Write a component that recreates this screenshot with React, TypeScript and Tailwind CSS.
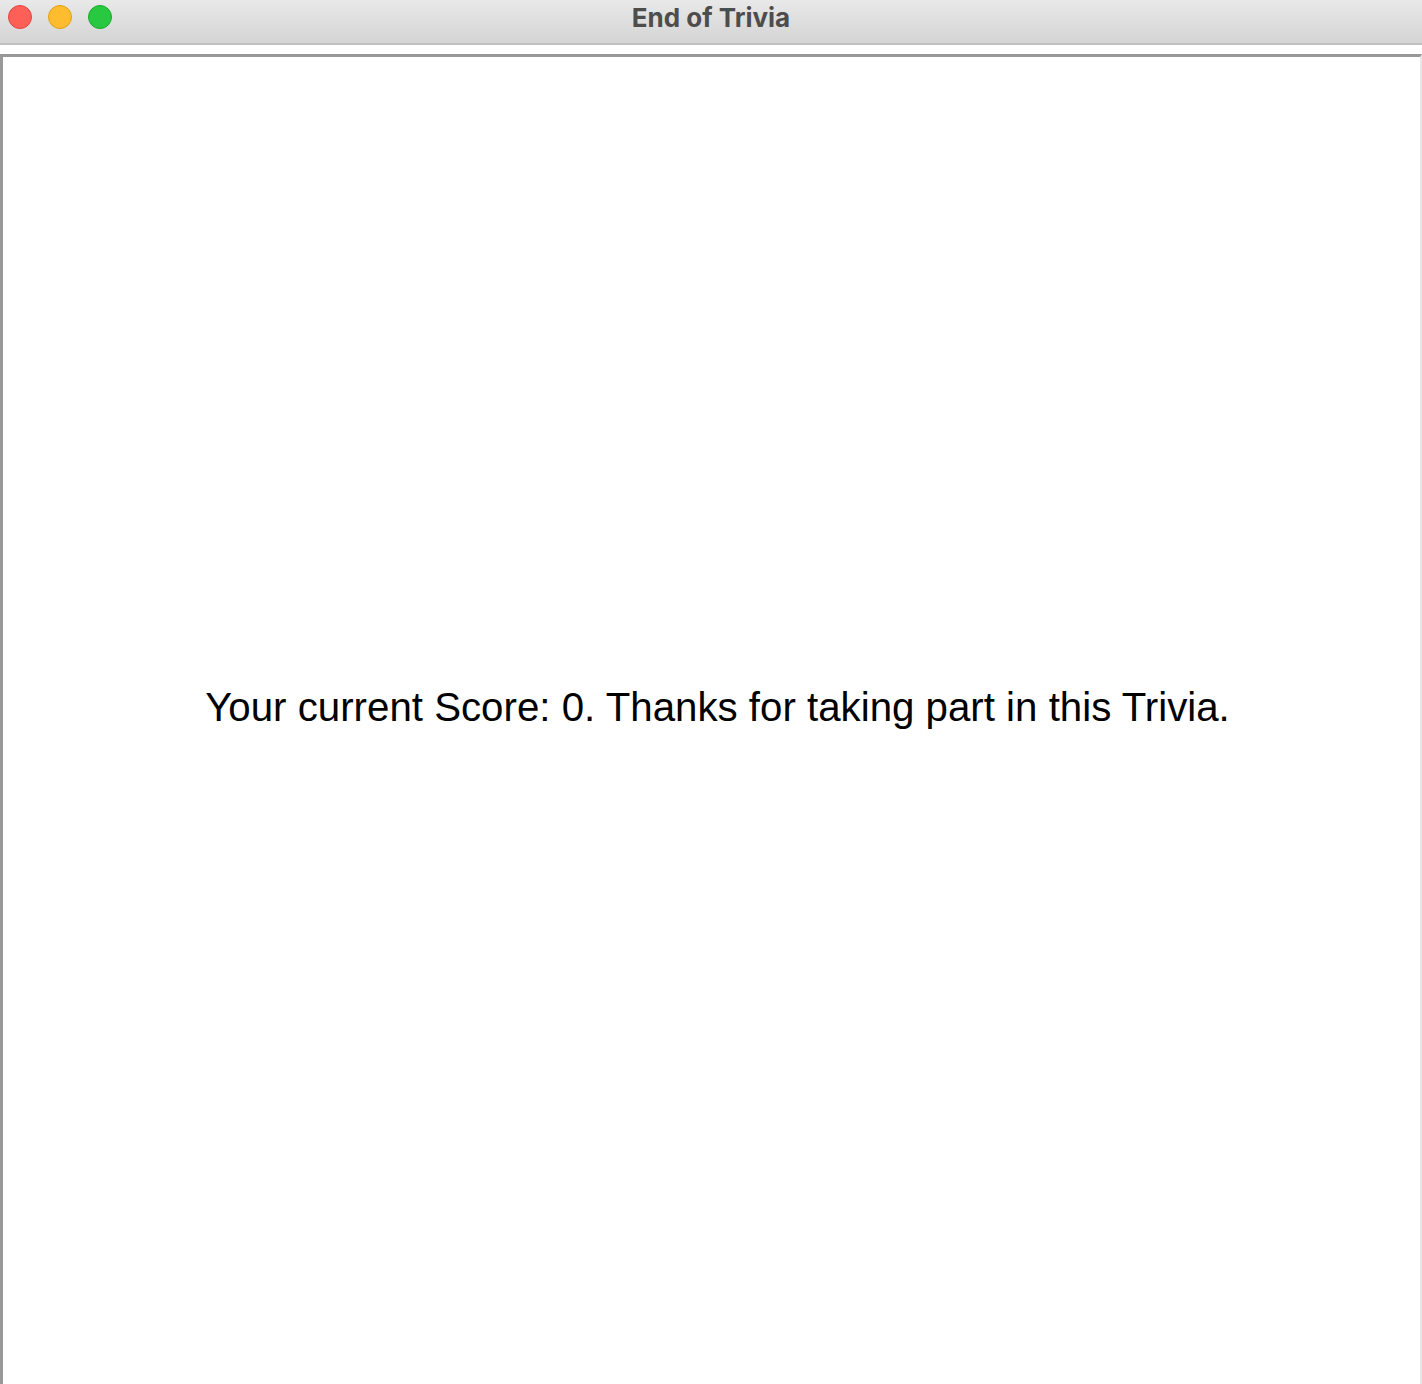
export default function App() {
  return (
    <div className="w-[1422px] h-[1384px] flex flex-col bg-white overflow-hidden" style={{ fontFamily: '"Liberation Sans", Arial, sans-serif' }}>
      <div className="h-[45px] shrink-0 relative flex items-start justify-center bg-gradient-to-b from-[#e9e9e9] to-[#d4d4d4] border-b-2 border-[#c0c0c0]">
        <div className="absolute left-[8px] top-[5px] flex gap-[16px]">
          <div className="w-[24px] h-[24px] rounded-full bg-[#fe5f57] border border-[#e2463f]" />
          <div className="w-[24px] h-[24px] rounded-full bg-[#febc2e] border border-[#e1a116]" />
          <div className="w-[24px] h-[24px] rounded-full bg-[#28c840] border border-[#1aab29]" />
        </div>
        <span className="text-[26px] font-bold text-[#4d4d4d] leading-none mt-[5px]" style={{ fontFamily: 'Inter, "Liberation Sans", sans-serif' }}>End of Trivia</span>
      </div>
      <div className="h-[9px] shrink-0 bg-white" />
      <div className="flex-1 border-t-[3px] border-l-[3px] border-r-2 border-t-[#989898] border-l-[#989898] border-r-[#e6e6e6] flex justify-center pt-[631px] pl-[12px]">
        <span className="text-[40.25px] text-black leading-none whitespace-nowrap">Your current Score: 0. Thanks for taking part in this Trivia.</span>
      </div>
    </div>
  );
}
